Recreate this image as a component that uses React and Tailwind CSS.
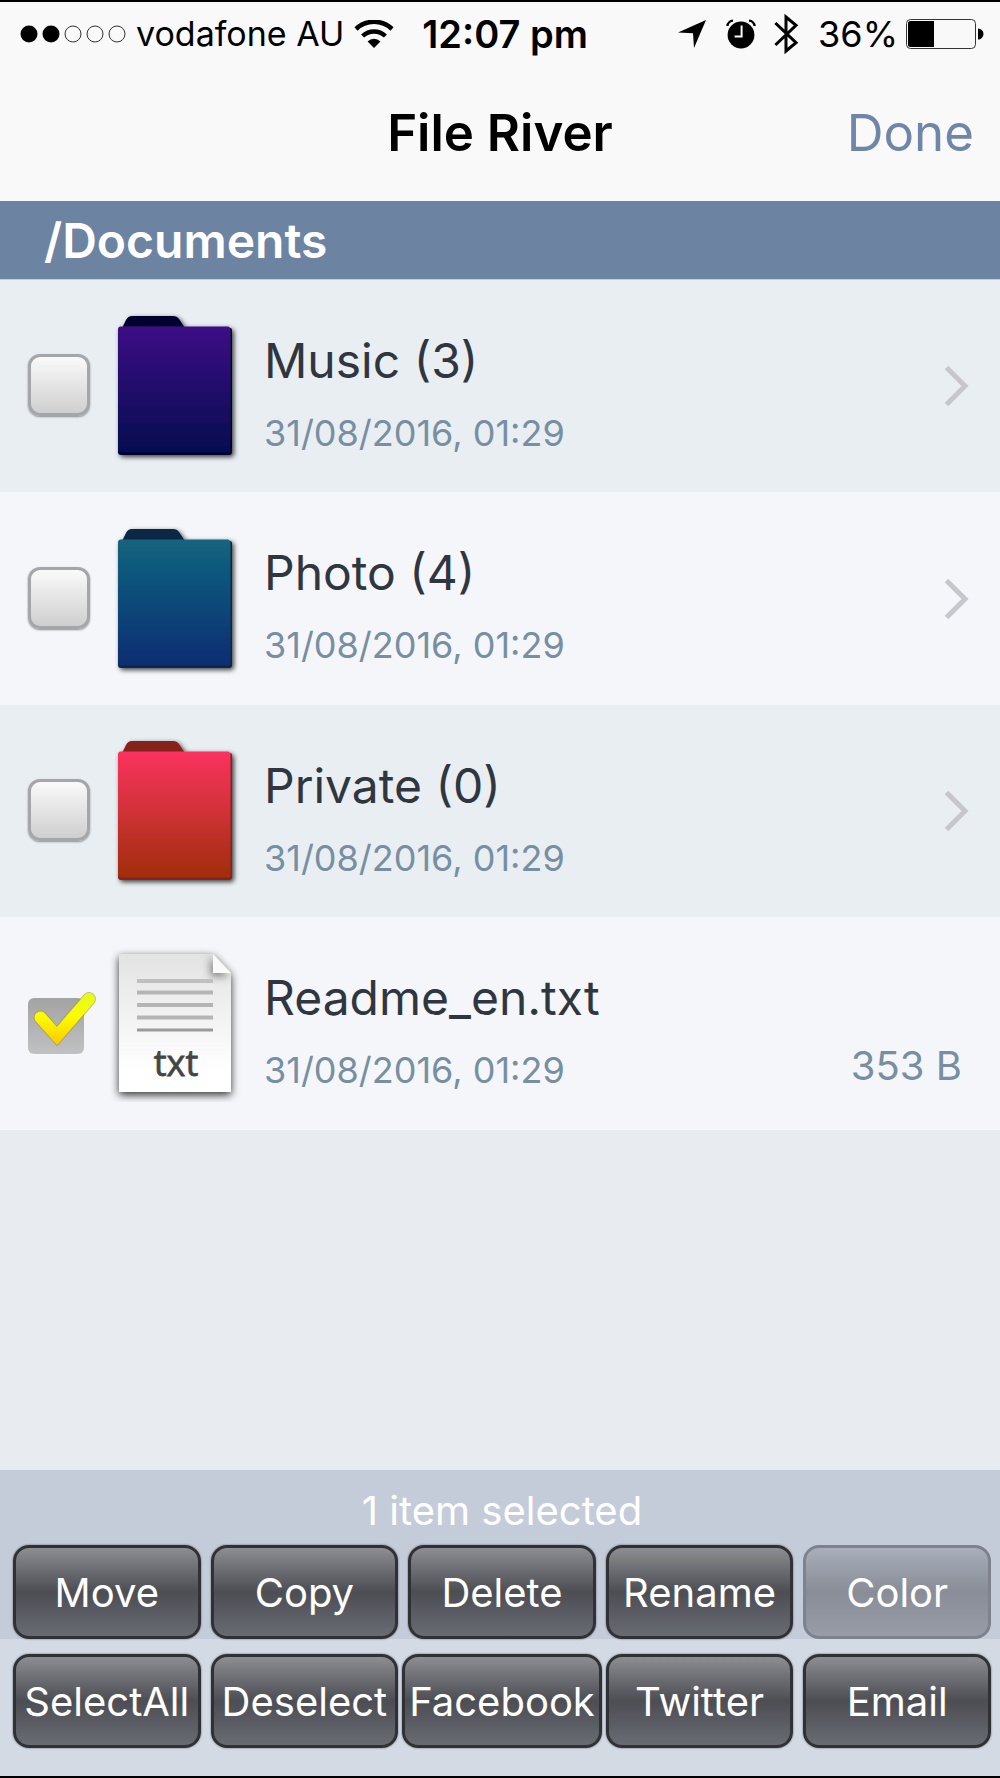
import { useState } from 'react';

const initialItems = [
    { id: 'music', name: 'Music (3)', date: '31/08/2016, 01:29', type: 'folder', top: '#3d1185', bottom: '#040c50', tab: '#04002f' },
    { id: 'photo', name: 'Photo (4)', date: '31/08/2016, 01:29', type: 'folder', top: '#126580', bottom: '#0c2d71', tab: '#072745' },
    { id: 'private', name: 'Private (0)', date: '31/08/2016, 01:29', type: 'folder', top: '#fb325f', bottom: '#a12e0b', tab: '#85201f' },
    { id: 'readme', name: 'Readme_en.txt', date: '31/08/2016, 01:29', type: 'txt', size: '353 B' },
];

const actions = ['Move', 'Copy', 'Delete', 'Rename', 'Color'];
const moreActions = ['SelectAll', 'Deselect', 'Facebook', 'Twitter', 'Email'];

const SignalDots = () => (
    <svg viewBox="0 0 106 18" className="w-[106px] h-[18px] shrink-0" aria-hidden="true">
        <circle cx="9" cy="9" r="8.5" />
        <circle cx="31" cy="9" r="8.5" />
        <circle cx="53" cy="9" r="8" fill="none" stroke="#333" />
        <circle cx="75" cy="9" r="8" fill="none" stroke="#333" />
        <circle cx="97" cy="9" r="8" fill="none" stroke="#333" />
    </svg>
);

const WifiIcon = () => (
    <svg viewBox="0 0 40 28" className="w-10 h-7 shrink-0" aria-hidden="true">
        <path d="M2 9 A26 26 0 0 1 38 9" fill="none" stroke="#000" strokeWidth="4.6" />
        <path d="M8.6 16 A16.5 16.5 0 0 1 31.4 16" fill="none" stroke="#000" strokeWidth="4.4" />
        <path d="M13.6 21.4 A9.2 9.2 0 0 1 26.4 21.4 L20 28 Z" />
    </svg>
);

const LocationIcon = () => (
    <svg viewBox="0 0 28 28" className="size-7" aria-hidden="true">
        <path d="M28 0 L16 28 L15 13.2 L0 12.4 Z" />
    </svg>
);

const AlarmIcon = () => (
    <svg viewBox="0 0 30 30" className="size-[30px]" aria-hidden="true">
        <circle cx="15" cy="16" r="13.4" />
        <path d="M1.4 7 A6 6 0 0 1 7 1.6" fill="none" stroke="#000" strokeWidth="2.4" />
        <path d="M23 1.6 A6 6 0 0 1 28.6 7" fill="none" stroke="#000" strokeWidth="2.4" />
        <path d="M15.6 6.6 V17.4 H8.6" fill="none" stroke="#f9f9f9" strokeWidth="2" />
    </svg>
);

const BluetoothIcon = () => (
    <svg viewBox="0 0 24 42" className="w-6 h-[42px]" aria-hidden="true">
        <path d="M1.4 10 L22 29.6 L12 38 V4 L22 12.4 L1.4 32" fill="none" stroke="#000" strokeWidth="3" />
    </svg>
);

const BatteryIcon = () => (
    <svg viewBox="0 0 78 30" className="w-[78px] h-[30px]" aria-hidden="true">
        <rect x="0.5" y="0.5" width="69" height="29" rx="4" fill="none" stroke="#333" />
        <path d="M4.5 2 H28 V28 H4.5 A2.5 2.5 0 0 1 2 25.5 V4.5 A2.5 2.5 0 0 1 4.5 2 Z" />
        <path d="M72 9.5 A5.5 5.5 0 0 1 72 20.5 Z" />
    </svg>
);

const FolderIcon = ({ id, top, bottom, tab }) => (
    <svg viewBox="0 2 136 156" className="w-[136px] h-[156px] shrink-0" aria-hidden="true">
        <defs>
            <linearGradient id={`fill-${id}`} x1="0" y1="0" x2="0" y2="1">
                <stop offset="0" stopColor={top} />
                <stop offset="1" stopColor={bottom} />
            </linearGradient>
            <filter id={`shadow-${id}`} x="-20%" y="-20%" width="140%" height="140%">
                <feDropShadow dx="2" dy="2" stdDeviation="2.6" floodColor="#000" floodOpacity="0.75" />
            </filter>
        </defs>
        <g filter={`url(#shadow-${id})`}>
            <path d="M13 24 L18 14 Q20 10 24 10 H65 Q69 10 71 13 L77 22 H122 Q124 22 124 24 V146 Q124 149 121 149 H13 Q10 149 10 146 Z" fill={tab} />
            <path d="M12 20.5 H120 Q122.5 21 122.5 24 V144 Q122.5 146.5 120 146.5 H13 Q10 146 10 143 V23 Q10 21 12 20.5 Z" fill={`url(#fill-${id})`} />
        </g>
    </svg>
);

const TextFileIcon = () => (
    <svg viewBox="0 1 136 156" className="w-[136px] h-[156px] shrink-0" aria-hidden="true">
        <defs>
            <linearGradient id="paper" x1="0" y1="0" x2="0" y2="1">
                <stop offset="0" stopColor="#e3e3e3" />
                <stop offset="0.85" stopColor="#fff" />
            </linearGradient>
            <filter id="paper-shadow" x="-20%" y="-20%" width="140%" height="140%">
                <feDropShadow dx="0" dy="3" stdDeviation="4" floodColor="#000" floodOpacity="0.8" />
            </filter>
            <filter id="fold-shadow" x="-60%" y="-60%" width="220%" height="220%">
                <feDropShadow dx="-2" dy="3" stdDeviation="4" floodColor="#000" floodOpacity="0.5" />
            </filter>
            <clipPath id="paper-clip">
                <path d="M11 9 H105 L123 28 V147 H11 Z" />
            </clipPath>
        </defs>
        <path d="M11 9 H105 L123 28 V147 H11 Z" fill="url(#paper)" filter="url(#paper-shadow)" />
        <g clipPath="url(#paper-clip)">
            <path d="M105 9 L123 28 H105 Z" fill="#fafafa" filter="url(#fold-shadow)" />
        </g>
        <path d="M29 36 H105" stroke="#c0c0c0" strokeWidth="4" />
        <path d="M29 47.5 H105" stroke="#b5b5b5" strokeWidth="4" />
        <path d="M29 60 H105 M29 72.5 H105" stroke="#b5b5b5" strokeWidth="4" />
        <path d="M29 85 H105" stroke="#9a9a9a" strokeWidth="3" />
        <text x="68" y="131" textAnchor="middle" fontFamily="Open Sans, sans-serif" fontSize="36" fill="#444" stroke="#444" strokeWidth="0.8">txt</text>
    </svg>
);

const Tick = () => (
    <svg viewBox="0 0 68 56" className="absolute left-0 -top-1 w-[68px] h-14 pointer-events-none" aria-hidden="true">
        <defs>
            <linearGradient id="tick" gradientUnits="userSpaceOnUse" x1="0" y1="0" x2="0" y2="54">
                <stop offset="0" stopColor="#e0fb20" />
                <stop offset="0.45" stopColor="#fcfc00" />
                <stop offset="1" stopColor="#fbc800" />
            </linearGradient>
        </defs>
        <path d="M12.5 25.5 L29 44 L61 7" fill="none" stroke="#a89a2c" strokeWidth="14" strokeLinecap="round" opacity="0.6" />
        <path d="M12.5 25.5 L29 44 L61 7" fill="none" stroke="url(#tick)" strokeWidth="12" strokeLinecap="round" />
    </svg>
);

const Chevron = () => (
    <svg viewBox="0 0 26 42" className="w-[26px] h-[42px]" fill="none" stroke="#c7c6cc" strokeWidth="5" aria-hidden="true">
        <path d="M2.5 2.5 L21 21 L2.5 39.5" />
    </svg>
);

const FileRow = ({ item, checked, onToggle }) => (
    <li className="flex items-center pl-7 pr-[30px] odd:h-[212px] even:h-[213px] odd:bg-[#e8eef2] even:bg-[#f4f6fa]">
        <div className={`relative w-20 shrink-0 ${checked ? 'h-14' : 'h-16'}`}>
            <input
                type="checkbox"
                aria-label={item.name}
                checked={checked}
                onChange={onToggle}
                className="block appearance-none size-[62px] rounded-xl border-3 border-[#a4a7aa] bg-linear-to-b from-[#fafafa] to-[#cfcfd0] shadow-[0_1px_2px_#8a8d90] checked:mt-0.5 checked:size-14 checked:rounded-md checked:border-0 checked:from-[#a3a3a4] checked:to-[#c0c1c3] checked:shadow-none"
            />
            {checked && <Tick />}
        </div>
        {item.type === 'folder' ? <FolderIcon {...item} /> : <TextFileIcon />}
        <div className="flex-1 self-stretch pt-[51px] pl-5">
            <h2 className="text-[48px] leading-[60px] text-[#2f3640]">{item.name}</h2>
            <p className="mt-[22px] text-[36px] leading-10 text-[#788fa1]">{item.date}</p>
        </div>
        {item.size ? (
            <span className="self-end pr-2 pb-[39px] text-[40px] leading-[50px] text-[#788fa1]">{item.size}</span>
        ) : (
            <Chevron />
        )}
    </li>
);

const ToolButton = ({ label, disabled, onClick }) => (
    <button
        type="button"
        disabled={disabled}
        onClick={onClick}
        className={`${label === 'Facebook' ? 'w-[101%]' : 'w-[95%]'} h-[94px] pt-0.5 rounded-2xl border-3 text-[40px] leading-[50px] text-white whitespace-nowrap ${
            disabled
                ? 'border-[#7d828d] bg-linear-to-b from-[#a8aeba] via-[#888d97] to-[#989ca7]'
                : 'border-[#303134] bg-linear-to-b from-[#8d8e92] via-[#4d4e54] to-[#696b73] shadow-[0_0_2px_#55585f]'
        }`}
    >
        {label}
    </button>
);

const App = () => {
    const [selected, setSelected] = useState(['readme']);

    const toggle = (id) => {
        setSelected((prev) => (prev.includes(id) ? prev.filter((x) => x !== id) : [...prev, id]));
    };

    const handleAction = (label) => {
        if (label === 'SelectAll') setSelected(initialItems.map((item) => item.id));
        if (label === 'Deselect') setSelected([]);
    };

    return (
        <div className="min-h-screen flex flex-col bg-[#e8ecf0] border-y-2 border-black font-['Inter',sans-serif]">
            {/* Status bar */}
            <div className="flex items-center h-[62px] pl-5 pr-4 pt-0.5 bg-[#f9f9f9] text-[36px] leading-[44px] text-black whitespace-nowrap">
                <SignalDots />
                <span className="ml-2.5 text-[34px]">vodafone AU</span>
                <span className="ml-2.5"><WifiIcon /></span>
                <span className="ml-7 text-[38px] font-semibold">12:07 pm</span>
                <div className="ml-auto flex items-center">
                    <LocationIcon />
                    <span className="ml-5"><AlarmIcon /></span>
                    <span className="ml-[18px]"><BluetoothIcon /></span>
                    <span className="ml-5">36%</span>
                    <span className="ml-2"><BatteryIcon /></span>
                </div>
            </div>

            {/* Navigation bar */}
            <header className="grid grid-cols-[1fr_auto_1fr] items-center h-[137px] px-[26px] bg-[#f9f9f9]">
                <h1 className="col-start-2 text-[51px] leading-[64px] font-semibold text-black">File River</h1>
                <button type="button" className="justify-self-end text-[51px] leading-[64px] text-[#6f86a8]">Done</button>
            </header>

            <div className="h-[79px] px-11 pt-0.5 flex items-center bg-[#6d83a2] border-b border-[#c5cfdb] text-[48px] leading-[60px] font-semibold text-white">
                /Documents
            </div>

            <ul>
                {initialItems.map((item) => (
                    <FileRow key={item.id} item={item} checked={selected.includes(item.id)} onToggle={() => toggle(item.id)} />
                ))}
            </ul>

            {/* Toolbar */}
            <footer className="mt-auto">
                <div className="bg-[#c4cbd9] pl-2 pr-1">
                    <p className="h-[75px] pt-4 text-center text-[40px] leading-[50px] text-white">
                        {selected.length} item selected
                    </p>
                    <div className="grid grid-cols-5 justify-items-center">
                        {actions.map((label) => (
                            <ToolButton key={label} label={label} disabled={label === 'Color'} onClick={() => handleAction(label)} />
                        ))}
                    </div>
                </div>
                <div className="bg-[#d3dae4] pl-2 pr-1 pt-[15px] pb-7 grid grid-cols-5 justify-items-center">
                    {moreActions.map((label) => (
                        <ToolButton key={label} label={label} onClick={() => handleAction(label)} />
                    ))}
                </div>
            </footer>
        </div>
    );
};

export default App;
